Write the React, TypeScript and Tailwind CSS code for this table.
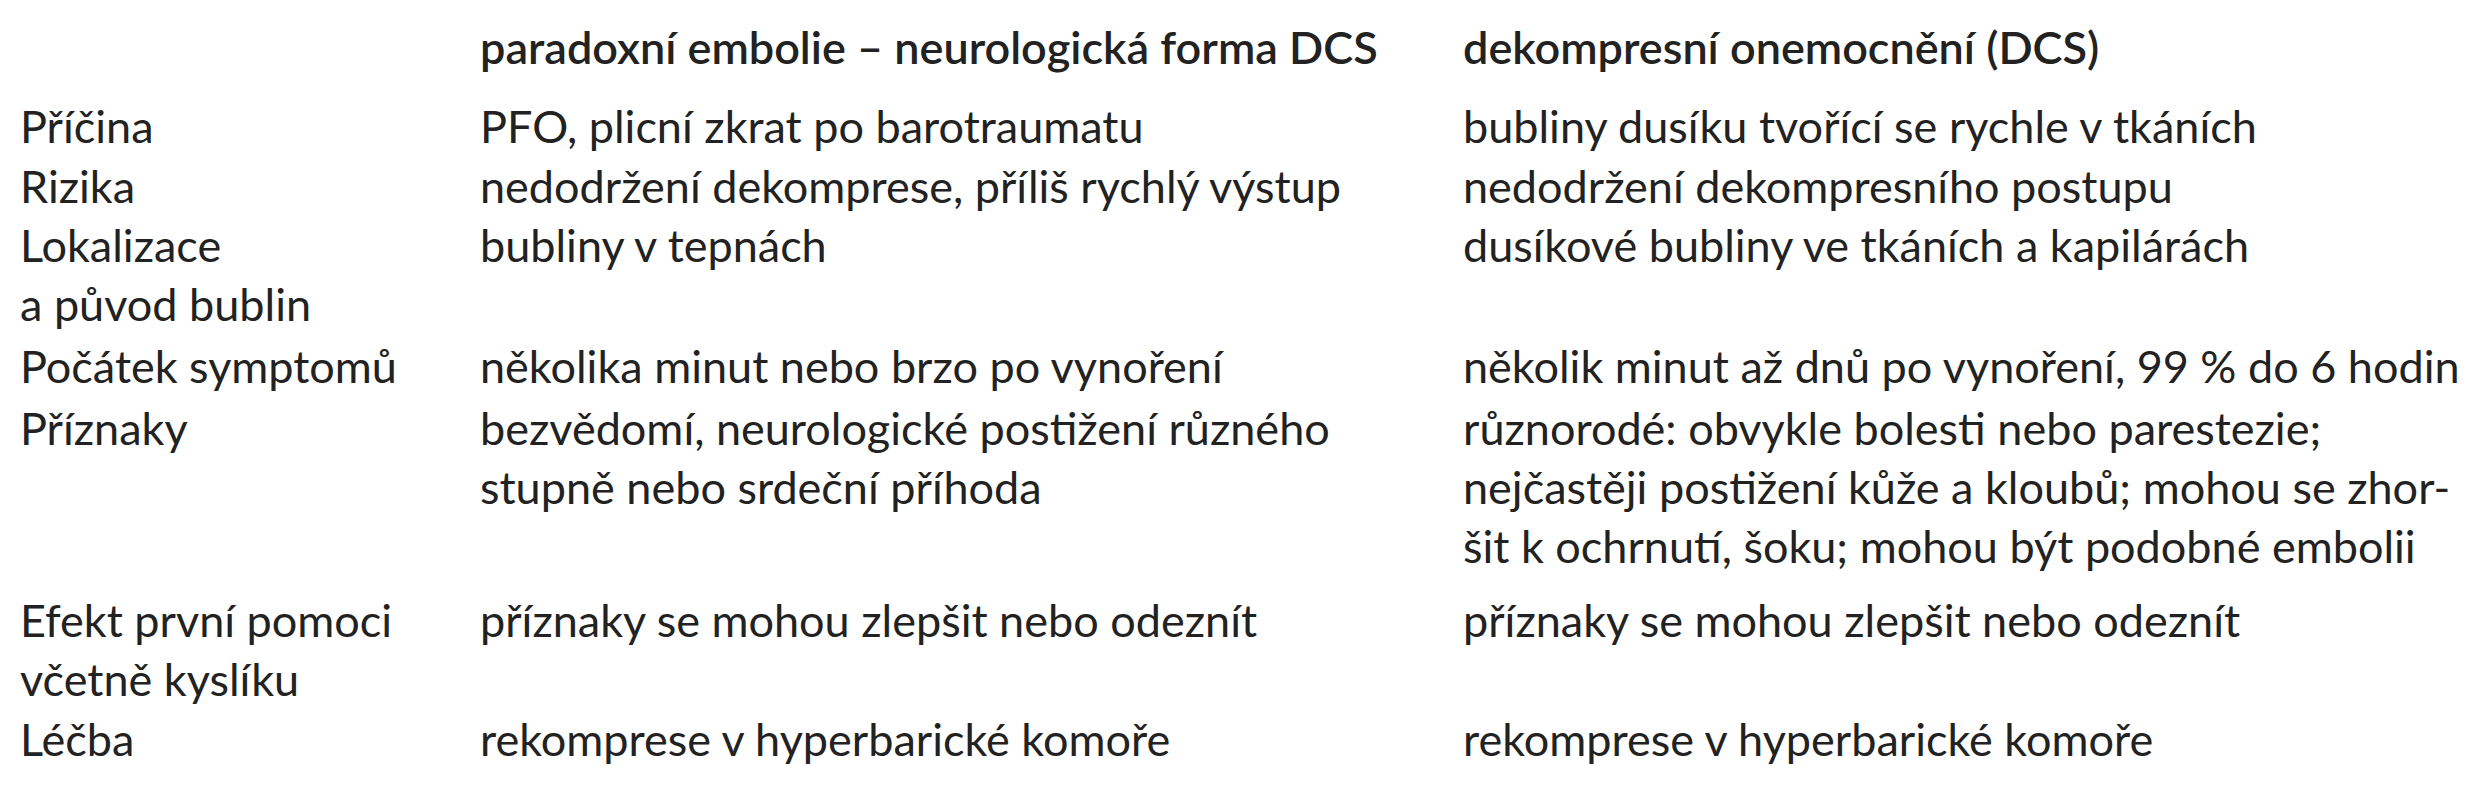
import React from "react";

type Row = { label: string[]; a: string[]; b: string[]; pb: string };

const rows: Row[] = [
  { label: ["Příčina"], a: ["PFO, plicní zkrat po barotraumatu"], b: ["bubliny dusíku tvořící se rychle v tkáních"], pb: "pb-[1px]" },
  { label: ["Rizika"], a: ["nedodržení dekomprese, příliš rychlý výstup"], b: ["nedodržení dekompresního postupu"], pb: "pb-0" },
  { label: ["Lokalizace", "a původ bublin"], a: ["bubliny v tepnách"], b: ["dusíkové bubliny ve tkáních a kapilárách"], pb: "pb-[3px]" },
  { label: ["Počátek symptomů"], a: ["několika minut nebo brzo po vynoření"], b: ["několik minut až dnů po vynoření, 99 % do 6 hodin"], pb: "pb-[3px]" },
  {
    label: ["Příznaky"],
    a: ["bezvědomí, neurologické postižení různého", "stupně nebo srdeční příhoda"],
    b: [
      "různorodé: obvykle bolesti nebo parestezie;",
      "nejčastěji postižení kůže a kloubů; mohou se zhor-",
      "šit k ochrnutí, šoku; mohou být podobné embolii",
    ],
    pb: "pb-[15px]",
  },
  { label: ["Efekt první pomoci", "včetně kyslíku"], a: ["příznaky se mohou zlepšit nebo odeznít"], b: ["příznaky se mohou zlepšit nebo odeznít"], pb: "pb-[1px]" },
  { label: ["Léčba"], a: ["rekomprese v hyperbarické komoře"], b: ["rekomprese v hyperbarické komoře"], pb: "pb-0" },
];

function Lines({ lines }: { lines: string[] }) {
  return (
    <>
      {lines.map((l, i) => (
        <div key={i} className="whitespace-nowrap">
          {l}
        </div>
      ))}
    </>
  );
}

export default function App() {
  return (
    <div className="w-[2473px] h-[800px] bg-white overflow-hidden">
      <div
        className="pt-[18px] pl-[20px] text-[45px] leading-[59px] text-[#222222] grid grid-cols-[460px_983px_1fr]"
        style={{ fontFamily: "Lato, 'Open Sans', sans-serif" }}
      >
        <div className="pb-[20px]"></div>
        <div className="pb-[20px] font-semibold whitespace-nowrap">paradoxní embolie – neurologická forma DCS</div>
        <div className="pb-[20px] font-semibold whitespace-nowrap">dekompresní onemocnění (DCS)</div>
        {rows.map((r, i) => (
          <React.Fragment key={i}>
            <div className={r.pb}>
              <Lines lines={r.label} />
            </div>
            <div className={r.pb}>
              <Lines lines={r.a} />
            </div>
            <div className={r.pb}>
              <Lines lines={r.b} />
            </div>
          </React.Fragment>
        ))}
      </div>
    </div>
  );
}
